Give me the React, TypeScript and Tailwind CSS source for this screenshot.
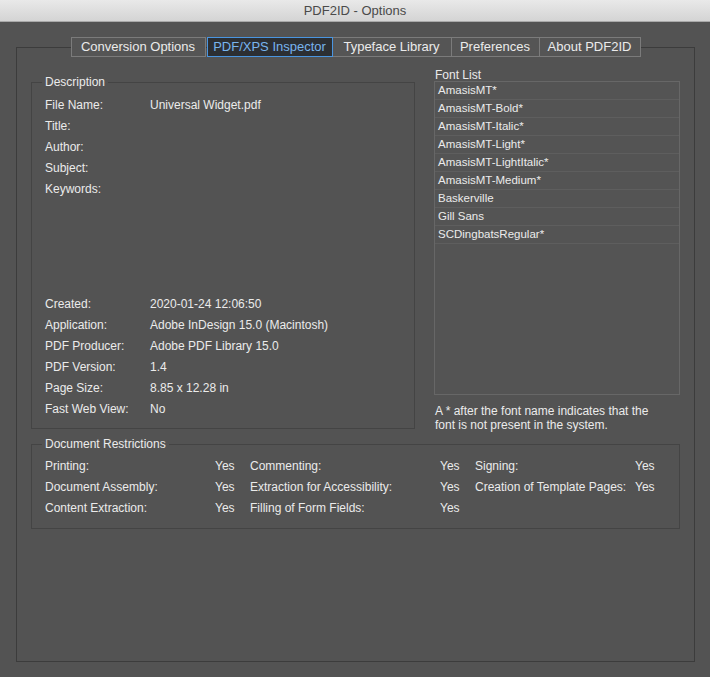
import React from "react";

const descTop: [string, string][] = [
  ["File Name:", "Universal Widget.pdf"],
  ["Title:", ""],
  ["Author:", ""],
  ["Subject:", ""],
  ["Keywords:", ""],
];

const descBottom: [string, string][] = [
  ["Created:", "2020-01-24 12:06:50"],
  ["Application:", "Adobe InDesign 15.0 (Macintosh)"],
  ["PDF Producer:", "Adobe PDF Library 15.0"],
  ["PDF Version:", "1.4"],
  ["Page Size:", "8.85 x 12.28 in"],
  ["Fast Web View:", "No"],
];

const fonts = [
  "AmasisMT*",
  "AmasisMT-Bold*",
  "AmasisMT-Italic*",
  "AmasisMT-Light*",
  "AmasisMT-LightItalic*",
  "AmasisMT-Medium*",
  "Baskerville",
  "Gill Sans",
  "SCDingbatsRegular*",
];

const restrictions: [string, string, string, string, string, string][] = [
  ["Printing:", "Yes", "Commenting:", "Yes", "Signing:", "Yes"],
  ["Document Assembly:", "Yes", "Extraction for Accessibility:", "Yes", "Creation of Template Pages:", "Yes"],
  ["Content Extraction:", "Yes", "Filling of Form Fields:", "Yes", "", ""],
];

function DescRow({ label, value }: { label: string; value: string }) {
  return (
    <div className="flex h-[21px] items-center leading-[21px]">
      <div className="w-[105px] shrink-0">{label}</div>
      <div>{value}</div>
    </div>
  );
}

export default function App() {
  return (
    <div
      className="w-[710px] h-[677px] bg-[#535353] text-[#ebebeb] text-[12px] overflow-hidden"
      style={{ fontFamily: '"Liberation Sans", Arial, sans-serif' }}
    >
      {/* Title bar */}
      <div className="h-[22px] bg-gradient-to-b from-[#e9e9e9] to-[#d4d4d4] border-b border-[#a9a9a9] flex items-center justify-center text-[13px] text-[#4a4a4a]">
        PDF2ID - Options
      </div>

      <div className="pl-[16px] pr-[15px]">
        {/* Tabs */}
        <div className="relative z-10 mt-[15px] flex justify-center h-[20px] text-[13px] leading-[18px]">
          <div className="w-[135px] h-[20px] border border-[#7b7b7b] bg-[#555555] flex items-center justify-center">
            Conversion Options
          </div>
          <div className="w-[1px]" />
          <div className="w-[126px] h-[20px] border border-[#4a95e0] bg-[#2c2f33] text-[#78b4ee] flex items-center justify-center">
            PDF/XPS Inspector
          </div>
          <div className="w-[119px] h-[20px] border-y border-r border-[#7b7b7b] bg-[#555555] flex items-center justify-center">
            Typeface Library
          </div>
          <div className="w-[88px] h-[20px] border-y border-r border-[#7b7b7b] bg-[#555555] flex items-center justify-center">
            Preferences
          </div>
          <div className="w-[101px] h-[20px] border-y border-r border-[#7b7b7b] bg-[#555555] flex items-center justify-center">
            About PDF2ID
          </div>
        </div>

        {/* Panel */}
        <div className="-mt-[10px] h-[615px] border border-[#3c3c3c] pt-[22px] pl-[14px] pr-[14px]">
          <div className="flex items-start gap-[19px] h-[359px]">
            {/* Description */}
            <fieldset className="mt-[5px] w-[384px] h-[354px] border border-[#444444] pl-[13px] pt-[6px]">
              <legend className="-ml-[3px] px-[3px] leading-[14px]">Description</legend>
              <div>
                {descTop.map(([l, v]) => (
                  <DescRow key={l} label={l} value={v} />
                ))}
              </div>
              <div className="mt-[94px]">
                {descBottom.map(([l, v]) => (
                  <DescRow key={l} label={l} value={v} />
                ))}
              </div>
            </fieldset>

            {/* Font list */}
            <div className="w-[246px]">
              <div className="pl-[1px] leading-[11px] h-[11px]">Font List</div>
              <div className="h-[314px] border border-[#676767] bg-[#545454]">
                {fonts.map((f) => (
                  <div
                    key={f}
                    className="h-[18px] border-b border-[#5e5e5e] pl-[3px] pt-[1px] text-[11.5px] leading-[15px]"
                  >
                    {f}
                  </div>
                ))}
              </div>
              <div className="mt-[10px] pl-[1px] leading-[13.5px]">
                A * after the font name indicates that the
                <br />
                font is not present in the system.
              </div>
            </div>
          </div>

          {/* Document Restrictions */}
          <fieldset className="mt-[8px] w-[649px] h-[92px] border border-[#444444] pl-[13px] pt-[5px]">
            <legend className="-ml-[3px] px-[3px] leading-[14px]">Document Restrictions</legend>
            {restrictions.map((r, i) => (
              <div key={i} className="flex h-[21px] items-center leading-[21px]">
                <div className="w-[170px] shrink-0">{r[0]}</div>
                <div className="w-[35px] shrink-0">{r[1]}</div>
                <div className="w-[190px] shrink-0">{r[2]}</div>
                <div className="w-[35px] shrink-0">{r[3]}</div>
                <div className="w-[160px] shrink-0">{r[4]}</div>
                <div>{r[5]}</div>
              </div>
            ))}
          </fieldset>
        </div>
      </div>
    </div>
  );
}
